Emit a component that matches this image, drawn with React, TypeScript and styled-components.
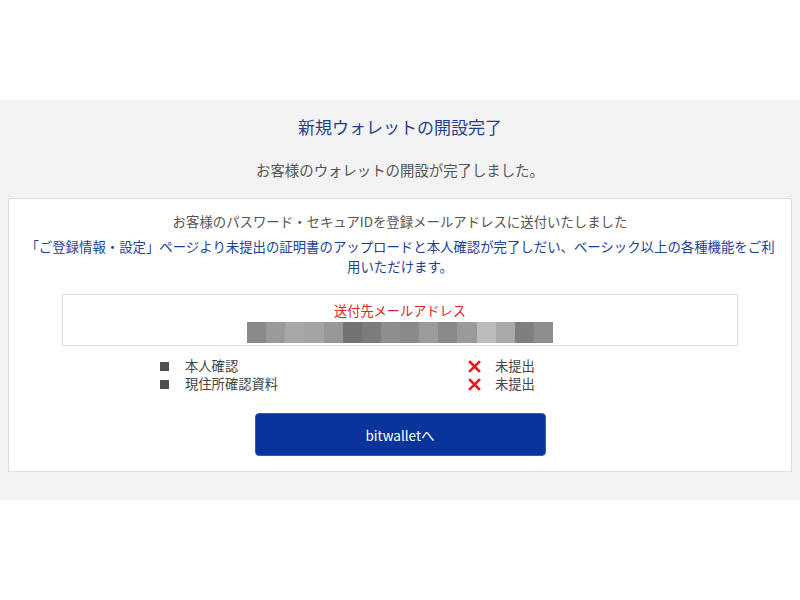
import React from "react";
import styled, { createGlobalStyle } from "styled-components";

const Global = createGlobalStyle`
  html, body { margin: 0; padding: 0; background: #ffffff; }
  body { font-family: "Noto Sans CJK JP", "Noto Sans", sans-serif; }
`;

const Page = styled.div`
  padding-top: 100px;
  background: #fff;
`;

const Band = styled.section`
  background: #f3f3f3;
  padding: 15px 8px 28px;
  display: flex;
  flex-direction: column;
  align-items: stretch;
`;

const Title = styled.h1`
  margin: 0;
  text-align: center;
  font-size: 17px;
  line-height: 24px;
  font-weight: 400;
  color: #1f3f8e;
`;

const Lead = styled.p`
  margin: 21px 0 18px;
  text-align: center;
  font-size: 14.4px;
  line-height: 20px;
  color: #555;
`;

const Card = styled.div`
  background: #fff;
  border: 1px solid #dedede;
  padding: 12px 12px 15px;
  display: flex;
  flex-direction: column;
`;

const Note = styled.p<{ $tone: "gray" | "blue" }>`
  margin: 0;
  text-align: center;
  font-size: 13.4px;
  line-height: 20px;
  color: ${(p) => (p.$tone === "blue" ? "#1a4299" : "#555")};
  & + & { margin-top: 5px; }
`;

const MailBox = styled.div`
  margin: 18px 41px 0;
  border: 1px solid #dcdcdc;
  height: 52px;
  display: flex;
  flex-direction: column;
  align-items: center;
  padding-top: 6px;
  box-sizing: border-box;
`;

const MailLabel = styled.div`
  font-size: 13.2px;
  line-height: 20px;
  color: #d42828;
`;

const Blur = styled.div`
  display: flex;
  width: 306px;
  height: 21px;
  margin-top: 1px;
`;

const BlurCell = styled.span`
  flex: 1 1 0;
  height: 100%;
`;

const List = styled.div`
  margin: 11px 0 0 139px;
  display: grid;
  grid-template-columns: 308px auto;
`;

const Item = styled.div`
  display: flex;
  align-items: center;
  gap: 14px;
  font-size: 13.3px;
  line-height: 18px;
  color: #444;
`;

const Square = styled.span`
  width: 9px;
  height: 9px;
  background: #4f4f4f;
  margin-right: 2px;
`;

const Cross = styled.svg`
  width: 13px;
  height: 13px;
  flex: none;
`;

const ButtonRow = styled.div`
  display: flex;
  justify-content: center;
  margin-top: 20px;
`;

const Button = styled.button`
  width: 291px;
  height: 43px;
  border: 1px solid #3a5aa8;
  border-radius: 4px;
  background: #08349b;
  color: #fff;
  font-family: "Noto Sans CJK JP", "Noto Sans", sans-serif;
  font-size: 13.5px;
  cursor: pointer;
`;

const grays = [
  "#8a8a8a", "#9a9a9a", "#a8a8a8", "#a4a4a4", "#979797", "#727272",
  "#7c7c7c", "#8e8e8e", "#8a8a8a", "#9b9b9b", "#8a8a8a", "#9a9a9a",
  "#bbbbbb", "#a9a9a9", "#7f7f7f", "#8d8d8d",
];

const rows = [
  ["本人確認", "未提出"],
  ["現住所確認資料", "未提出"],
];

const X = () => (
  <Cross viewBox="0 0 13 13">
    <path d="M2 2 L11 11 M11 2 L2 11" stroke="#e01e1e" strokeWidth="2.6" strokeLinecap="square" />
  </Cross>
);

export default function App() {
  return (
    <>
      <Global />
      <Page>
        <Band>
          <Title>新規ウォレットの開設完了</Title>
          <Lead>お客様のウォレットの開設が完了しました。</Lead>
          <Card>
            <Note $tone="gray">お客様のパスワード・セキュアIDを登録メールアドレスに送付いたしました</Note>
            <Note $tone="blue">
              「ご登録情報・設定」ページより未提出の証明書のアップロードと本人確認が完了しだい、ベーシック以上の各種機能をご利用いただけます。
            </Note>
            <MailBox>
              <MailLabel>送付先メールアドレス</MailLabel>
              <Blur>
                {grays.map((g, i) => (
                  <BlurCell key={i} style={{ background: g }} />
                ))}
              </Blur>
            </MailBox>
            <List>
              {rows.map(([name, status]) => (
                <React.Fragment key={name}>
                  <Item>
                    <Square />
                    {name}
                  </Item>
                  <Item>
                    <X />
                    {status}
                  </Item>
                </React.Fragment>
              ))}
            </List>
            <ButtonRow>
              <Button>bitwalletへ</Button>
            </ButtonRow>
          </Card>
        </Band>
      </Page>
    </>
  );
}
